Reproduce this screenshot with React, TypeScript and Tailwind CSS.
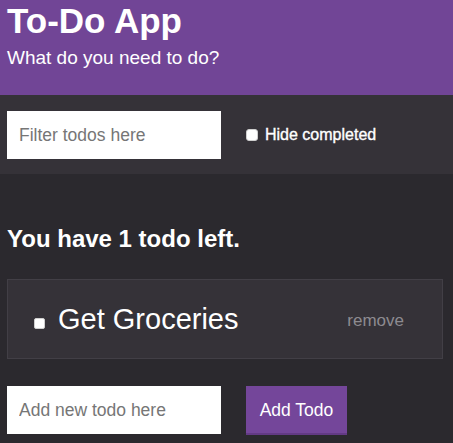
import React from "react";

export default function App() {
  return (
    <div className="min-h-screen w-full bg-[#2b292e] text-white [font-family:'Liberation_Sans',Arial,sans-serif]">
      <header className="h-[95px] bg-[#714596] px-[7px] pt-px">
        <h1 className="text-[35px] font-bold leading-[40px] tracking-[0px]">To-Do App</h1>
        <p className="mt-[5px] text-[19px] leading-[24px]">What do you need to do?</p>
      </header>

      <div className="flex h-[79px] items-start bg-[#353238] px-[7px] pt-[16px]">
        <input
          type="text"
          placeholder="Filter todos here"
          className="h-[48px] w-[214px] bg-white pl-3 text-[17.5px] text-black outline-none placeholder:text-[#767676]"
        />
        <label className="ml-[25px] flex h-[48px] items-center">
          <input
            type="checkbox"
            className="h-[12px] w-[12px] appearance-none rounded-[3px] border border-[#cfcfcf] bg-white"
          />
          <span className="ml-[7px] text-[16px] leading-[20px] [-webkit-text-stroke:0.35px_white]">Hide completed</span>
        </label>
      </div>

      <main className="px-[7px]">
        <h2 className="mt-[51px] text-[24px] font-bold leading-[28px]">You have 1 todo left.</h2>

        <div className="mt-[26px] flex h-[80px] w-[436px] items-center border border-[#423f46] bg-[#353238] pl-[26px] pr-[38px]">
          <input
            type="checkbox"
            className="mt-[8px] h-[11px] w-[11px] appearance-none rounded-[2px] border border-[#cfcfcf] bg-white"
          />
          <span className="ml-[13px] flex-1 text-[29px] leading-[34px]">Get Groceries</span>
          <button className="mt-[3px] text-[17px] leading-[20px] text-[#8d8b90]">remove</button>
        </div>

        <div className="mt-[27px] flex items-start">
          <input
            type="text"
            placeholder="Add new todo here"
            className="h-[48px] w-[214px] bg-white pl-3 text-[17.5px] text-black outline-none placeholder:text-[#767676]"
          />
          <button className="ml-[25px] h-[49px] w-[101px] border-b-2 border-[#633a85] bg-[#74469a] text-[17.5px] leading-[20px] text-white">
            Add Todo
          </button>
        </div>
      </main>
    </div>
  );
}
